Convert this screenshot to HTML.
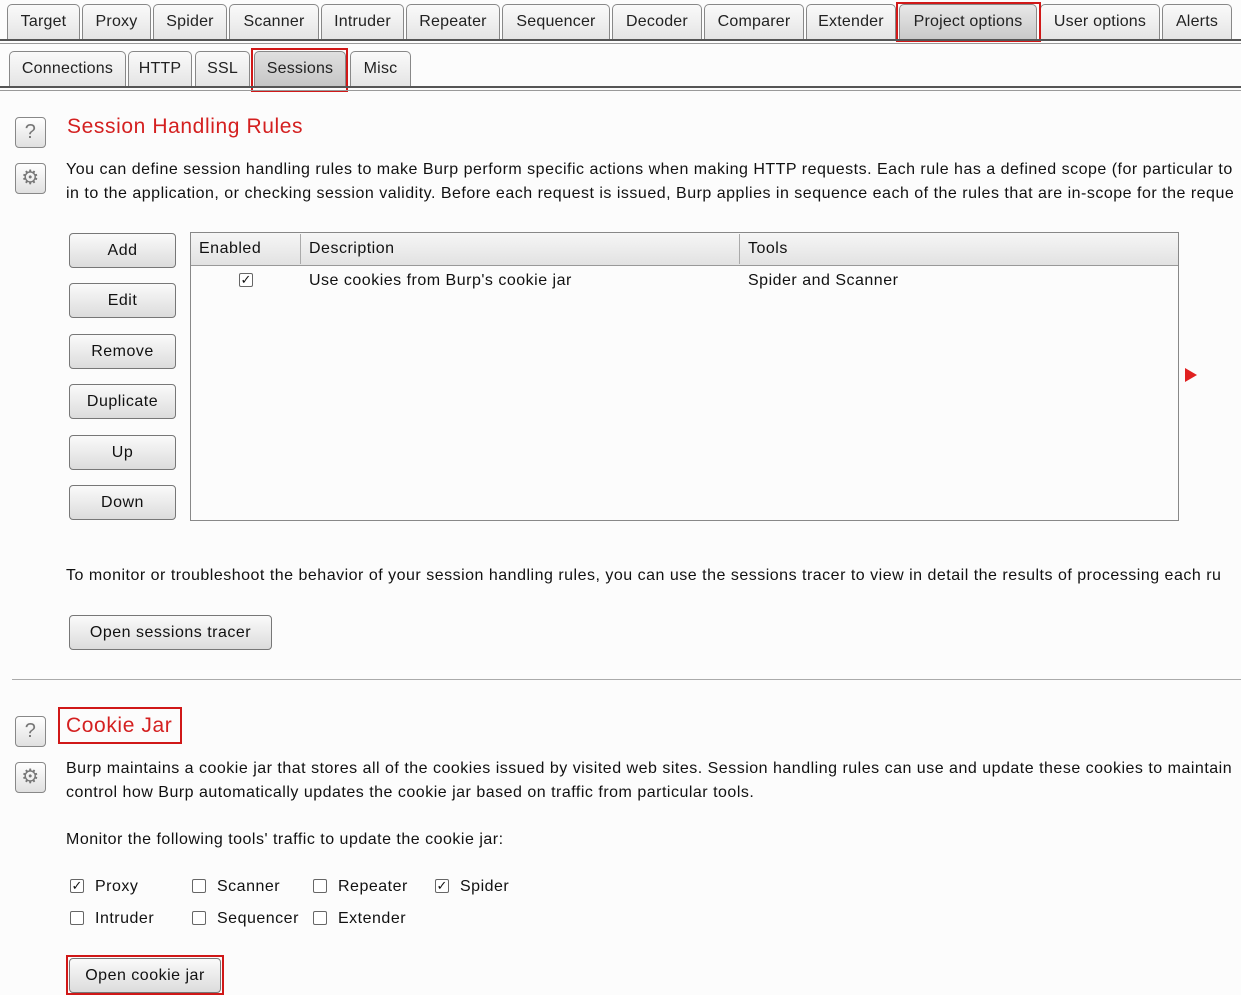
<!DOCTYPE html>
<html><head><style>
body{margin:0;width:1241px;height:995px;background:#fcfcfc;font-family:"Liberation Sans",sans-serif;font-size:16px;color:#111;position:relative;overflow:hidden;letter-spacing:0.5px}
.a{position:absolute;white-space:nowrap}
.tab{position:absolute;border:1px solid #888;border-bottom:none;border-radius:5px 5px 0 0;background:linear-gradient(#fafafa,#e4e4e4);text-align:center;box-sizing:border-box;font-size:16px;color:#222;letter-spacing:0.2px}
.line{position:absolute;left:0;width:1241px;height:2px;background:#555}
.btn{position:absolute;left:69px;width:107px;height:35px;border:1px solid #777;border-radius:4px;background:linear-gradient(#fafafa,#dcdcdc);box-sizing:border-box;text-align:center;line-height:33px;font-size:16px}
.ic{position:absolute;left:15px;width:31px;height:31px;border:1px solid #888;border-radius:4px;background:linear-gradient(#fff,#e0e0e0);box-sizing:border-box;text-align:center;line-height:29px;color:#777;font-size:20px}
.h{position:absolute;color:#d42020;font-size:21px;letter-spacing:0.6px}
.red{position:absolute;border:2px solid #d01818;box-sizing:border-box}
.cb{position:absolute;width:14px;height:14px;border:1px solid #666;border-radius:2px;background:#fff;box-sizing:border-box;font-size:13px;line-height:12px;text-align:center;letter-spacing:0}
</style></head><body>
<div class="tab" style="left:7px;top:4px;width:73px;height:36px;line-height:34px">Target</div>
<div class="tab" style="left:82px;top:4px;width:69px;height:36px;line-height:34px">Proxy</div>
<div class="tab" style="left:153px;top:4px;width:74px;height:36px;line-height:34px">Spider</div>
<div class="tab" style="left:229px;top:4px;width:90px;height:36px;line-height:34px">Scanner</div>
<div class="tab" style="left:321px;top:4px;width:83px;height:36px;line-height:34px">Intruder</div>
<div class="tab" style="left:406px;top:4px;width:94px;height:36px;line-height:34px">Repeater</div>
<div class="tab" style="left:502px;top:4px;width:108px;height:36px;line-height:34px">Sequencer</div>
<div class="tab" style="left:612px;top:4px;width:90px;height:36px;line-height:34px">Decoder</div>
<div class="tab" style="left:704px;top:4px;width:100px;height:36px;line-height:34px">Comparer</div>
<div class="tab" style="left:806px;top:4px;width:90px;height:36px;line-height:34px">Extender</div>
<div class="tab" style="left:899px;top:4px;width:138px;height:36px;line-height:34px;background:linear-gradient(#e8e8e8,#c8c8c8)">Project options</div>
<div class="tab" style="left:1040px;top:4px;width:120px;height:36px;line-height:34px">User options</div>
<div class="tab" style="left:1162px;top:4px;width:70px;height:36px;line-height:34px">Alerts</div>
<div class="red" style="left:896px;top:2px;width:145px;height:40px"></div>
<div class="line" style="top:39px"></div><div class="line" style="top:43px;height:1px;background:#999"></div>

<div class="tab" style="left:9px;top:51px;width:117px;height:36px;line-height:34px">Connections</div>
<div class="tab" style="left:128px;top:51px;width:64px;height:36px;line-height:34px">HTTP</div>
<div class="tab" style="left:195px;top:51px;width:55px;height:36px;line-height:34px">SSL</div>
<div class="tab" style="left:254px;top:51px;width:92px;height:36px;line-height:34px;background:linear-gradient(#e0e0e0,#c4c4c4)">Sessions</div>
<div class="tab" style="left:350px;top:51px;width:61px;height:36px;line-height:34px">Misc</div>
<div class="red" style="left:251px;top:48px;width:97px;height:44px"></div>
<div class="line" style="top:86px"></div><div class="line" style="top:90px;height:1px;background:#999"></div>

<div class="ic" style="top:117px">?</div>
<div class="ic" style="top:163px">⚙</div>
<div class="h" style="left:67px;top:115px">Session Handling Rules</div>
<div class="a" style="left:66px;top:161px">You can define session handling rules to make Burp perform specific actions when making HTTP requests. Each rule has a defined scope (for particular to</div>
<div class="a" style="left:66px;top:185px">in to the application, or checking session validity. Before each request is issued, Burp applies in sequence each of the rules that are in-scope for the reque</div>

<div class="btn" style="top:233px">Add</div>
<div class="btn" style="top:283px">Edit</div>
<div class="btn" style="top:334px">Remove</div>
<div class="btn" style="top:384px">Duplicate</div>
<div class="btn" style="top:435px">Up</div>
<div class="btn" style="top:485px">Down</div>

<div class="a" style="left:190px;top:232px;width:989px;height:289px;border:1px solid #888;box-sizing:border-box;background:#fcfcfc"></div>
<div class="a" style="left:191px;top:233px;width:987px;height:32px;background:linear-gradient(#f6f6f6,#e2e2e2);border-bottom:1px solid #999"></div>
<div class="a" style="left:300px;top:234px;width:1px;height:30px;background:#aaa"></div>
<div class="a" style="left:739px;top:234px;width:1px;height:30px;background:#aaa"></div>
<div class="a" style="left:199px;top:240px">Enabled</div>
<div class="a" style="left:309px;top:240px">Description</div>
<div class="a" style="left:748px;top:240px">Tools</div>
<div class="cb" style="left:239px;top:273px">✓</div>
<div class="a" style="left:309px;top:272px">Use cookies from Burp's cookie jar</div>
<div class="a" style="left:748px;top:272px">Spider and Scanner</div>
<div class="a" style="left:1185px;top:368px;width:0;height:0;border-left:12px solid #e02020;border-top:7px solid transparent;border-bottom:7px solid transparent"></div>

<div class="a" style="left:66px;top:567px">To monitor or troubleshoot the behavior of your session handling rules, you can use the sessions tracer to view in detail the results of processing each ru</div>
<div class="btn" style="top:615px;width:203px">Open sessions tracer</div>
<div class="a" style="left:12px;top:679px;width:1229px;height:1px;background:#aaa"></div>

<div class="ic" style="top:716px">?</div>
<div class="ic" style="top:762px">⚙</div>
<div class="h" style="left:66px;top:714px">Cookie Jar</div>
<div class="red" style="left:58px;top:707px;width:124px;height:37px"></div>
<div class="a" style="left:66px;top:760px">Burp maintains a cookie jar that stores all of the cookies issued by visited web sites. Session handling rules can use and update these cookies to maintain</div>
<div class="a" style="left:66px;top:784px">control how Burp automatically updates the cookie jar based on traffic from particular tools.</div>
<div class="a" style="left:66px;top:831px">Monitor the following tools' traffic to update the cookie jar:</div>

<div class="cb" style="left:70px;top:879px">✓</div><div class="a" style="left:95px;top:878px">Proxy</div>
<div class="cb" style="left:192px;top:879px"></div><div class="a" style="left:217px;top:878px">Scanner</div>
<div class="cb" style="left:313px;top:879px"></div><div class="a" style="left:338px;top:878px">Repeater</div>
<div class="cb" style="left:435px;top:879px">✓</div><div class="a" style="left:460px;top:878px">Spider</div>
<div class="cb" style="left:70px;top:911px"></div><div class="a" style="left:95px;top:910px">Intruder</div>
<div class="cb" style="left:192px;top:911px"></div><div class="a" style="left:217px;top:910px">Sequencer</div>
<div class="cb" style="left:313px;top:911px"></div><div class="a" style="left:338px;top:910px">Extender</div>

<div class="btn" style="top:958px;width:152px">Open cookie jar</div>
<div class="red" style="left:66px;top:955px;width:158px;height:40px"></div>
</body></html>
